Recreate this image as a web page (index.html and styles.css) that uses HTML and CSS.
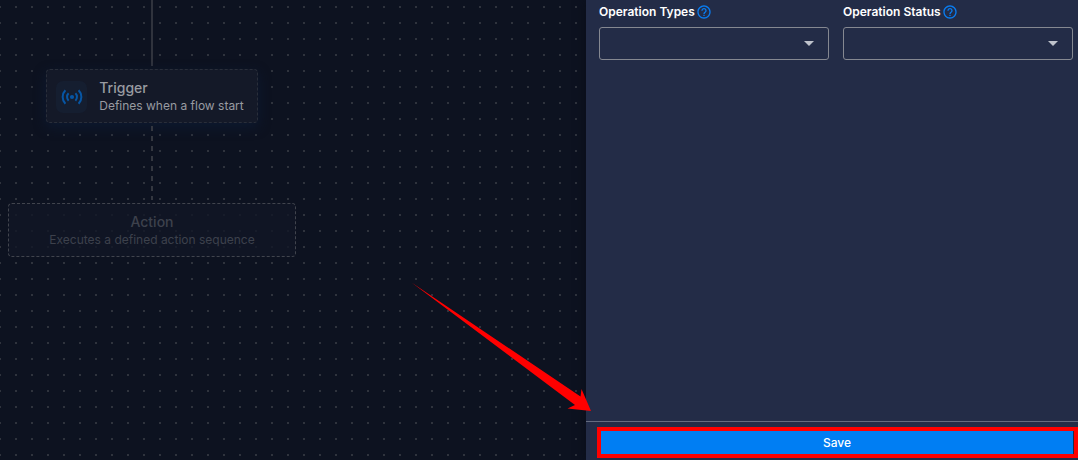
FILE: index.html
```html
<!DOCTYPE html>
<html lang="en">
<head>
<meta charset="utf-8">
<meta name="viewport" content="width=device-width, initial-scale=1">
<title>Flow editor</title>
<link rel="stylesheet" href="styles.css">
</head>
<body>
<div class="editor">
  <main class="canvas">
    <div class="flow">
      <div class="edge edge-solid"></div>
      <section class="node node-trigger">
        <span class="node-icon">
          <svg width="22" height="22" viewBox="0 0 22 22" fill="none" stroke="currentColor" stroke-width="2" aria-hidden="true">
            <circle cx="11" cy="11" r="2.100" fill="currentColor" stroke="none"/>
            <path d="M7.600 7.300a5.200 5.200 0 0 0 0 7.400M14.400 7.300a5.200 5.200 0 0 1 0 7.400M4.400 4.300a9.500 9.500 0 0 0 0 13.400M17.600 4.300a9.500 9.500 0 0 1 0 13.400"/>
          </svg>
        </span>
        <div>
          <h2 class="node-title">Trigger</h2>
          <p class="node-text">Defines when a flow start</p>
        </div>
      </section>
      <div class="edge edge-dashed"></div>
      <section class="node node-action">
        <h2 class="node-title">Action</h2>
        <p class="node-text">Executes a defined action sequence</p>
      </section>
    </div>
  </main>
  <aside class="panel">
    <form class="panel-form">
      <div class="fields">
        <div class="field">
          <div class="field-head">
            <label for="types">Operation Types</label>
            <svg class="help" width="16" height="16" viewBox="0 0 24 24" fill="currentColor" aria-hidden="true"><path d="M11 18h2v-2h-2v2zm1-16C6.480 2 2 6.480 2 12s4.480 10 10 10 10-4.480 10-10S17.520 2 12 2zm0 18c-4.410 0-8-3.590-8-8s3.590-8 8-8 8 3.590 8 8-3.590 8-8 8zm0-14c-2.210 0-4 1.790-4 4h2c0-1.100.9-2 2-2s2 .9 2 2c0 2-3 1.750-3 5h2c0-2.250 3-2.500 3-5 0-2.210-1.790-4-4-4z"/></svg>
          </div>
          <div class="select-box">
            <select id="types"><option></option></select>
            <svg class="caret" width="10" height="5" viewBox="0 0 10 5" aria-hidden="true"><path d="M0 0h10L5 5z" fill="currentColor"/></svg>
          </div>
        </div>
        <div class="field">
          <div class="field-head">
            <label for="status">Operation Status</label>
            <svg class="help" width="16" height="16" viewBox="0 0 24 24" fill="currentColor" aria-hidden="true"><path d="M11 18h2v-2h-2v2zm1-16C6.480 2 2 6.480 2 12s4.480 10 10 10 10-4.480 10-10S17.520 2 12 2zm0 18c-4.410 0-8-3.590-8-8s3.590-8 8-8 8 3.590 8 8-3.590 8-8 8zm0-14c-2.210 0-4 1.790-4 4h2c0-1.100.9-2 2-2s2 .9 2 2c0 2-3 1.750-3 5h2c0-2.250 3-2.500 3-5 0-2.210-1.790-4-4-4z"/></svg>
          </div>
          <div class="select-box">
            <select id="status"><option></option></select>
            <svg class="caret" width="10" height="5" viewBox="0 0 10 5" aria-hidden="true"><path d="M0 0h10L5 5z" fill="currentColor"/></svg>
          </div>
        </div>
      </div>
      <footer class="panel-footer">
        <button class="save" type="button">Save</button>
        <span class="highlight"></span>
        <svg class="pointer" width="180" height="130" viewBox="0 0 180 130" aria-hidden="true"><path d="M0.500 0.500L169.500 114.500L170.500 107L180 129L156.500 126.500L164 123Z" fill="#ff0000"/></svg>
      </footer>
    </form>
  </aside>
</div>
</body>
</html>
```
FILE: styles.css
```css
* {
  box-sizing: border-box;
}

body {
  margin: 0;
  font-family: Inter, "Liberation Sans", sans-serif;
  font-size: 12px;
  line-height: 16px;
  background: #0d1220;
}

.editor {
  display: flex;
  min-height: 100vh;
  overflow: hidden;
}

/* Canvas */
.canvas {
  flex: 1;
  min-width: 0;
  padding-left: 8px;
  background-color: #0d1220;
  background-image: radial-gradient(circle at 1px 1px, #2f333d 0, #2f333d 1px, transparent 1px);
  background-size: 16px 16px;
  background-position: -1px 6px;
}

.flow {
  display: flex;
  flex-direction: column;
  align-items: center;
  gap: 3px;
  width: 288px;
}

.edge {
  width: 2px;
}

.edge-solid {
  height: 66px;
  background: #30333d;
}

.edge-dashed {
  height: 74px;
  background: repeating-linear-gradient(#343740 0 5px, transparent 5px 10px);
}

.node {
  min-height: 54px;
  border: 1px dashed #292e3a;
  border-radius: 4px;
}

.node-title,
.node-text {
  margin: 0;
  line-height: 18px;
}

.node-title {
  font-size: 14px;
  font-weight: 500;
}

.node-text {
  font-weight: 400;
}

.node-trigger {
  display: flex;
  gap: 12px;
  padding: 9px 13px 7px 9px;
  background: #141928;
  color: #989ba1;
  box-shadow: 0 4px 12px #0d1930;
}

.node-icon {
  display: grid;
  place-items: center;
  align-self: center;
  width: 31px;
  height: 32px;
  border-radius: 7px;
  background: #151e30;
  color: #0756a5;
}

.node-action {
  width: 100%;
  padding: 9px 0 7px;
  border-color: #41444d;
  background: rgba(17, 22, 37, 0.8);
  color: #3d414c;
  text-align: center;
}

/* Settings panel */
.panel {
  display: flex;
  width: 492px;
  background: #232c47;
  box-shadow: 0 0 10px #0a0e19;
  color: #fff;
}

.panel-form {
  flex: 1;
  display: flex;
  flex-direction: column;
}

.fields {
  flex: 1;
  display: flex;
  gap: 14px;
  padding: 4px 5px 12px 13px;
}

.field {
  flex: 1;
}

.field-head {
  display: flex;
  align-items: center;
  gap: 1px;
  margin-bottom: 7px;
  font-weight: 600;
}

.help {
  color: #0a7cf0;
}

.select-box {
  display: grid;
  align-items: center;
}

.select-box > * {
  grid-area: 1 / 1;
}

select {
  appearance: none;
  width: 100%;
  height: 33px;
  padding: 0 32px 0 12px;
  border: 1px solid #858891;
  border-radius: 3px;
  background: transparent;
  color: inherit;
  font: inherit;
}

.caret {
  justify-self: end;
  margin-right: 15px;
  color: #bfc3cc;
  pointer-events: none;
}

.panel-footer {
  position: relative;
  padding: 9px 5px 6px 15px;
  border-top: 1px solid #646b7f;
}

.save {
  display: block;
  width: 100%;
  height: 23px;
  padding: 0;
  border: 0;
  background: #007ef3;
  color: #fff;
  font: inherit;
  font-weight: 500;
}

/* Callout drawn over the save button */
.highlight {
  position: absolute;
  inset: 5px 0 2px 11px;
  border: 4px solid #ff0000;
  pointer-events: none;
}

.pointer {
  position: absolute;
  left: -175px;
  bottom: 48px;
  pointer-events: none;
}
```
